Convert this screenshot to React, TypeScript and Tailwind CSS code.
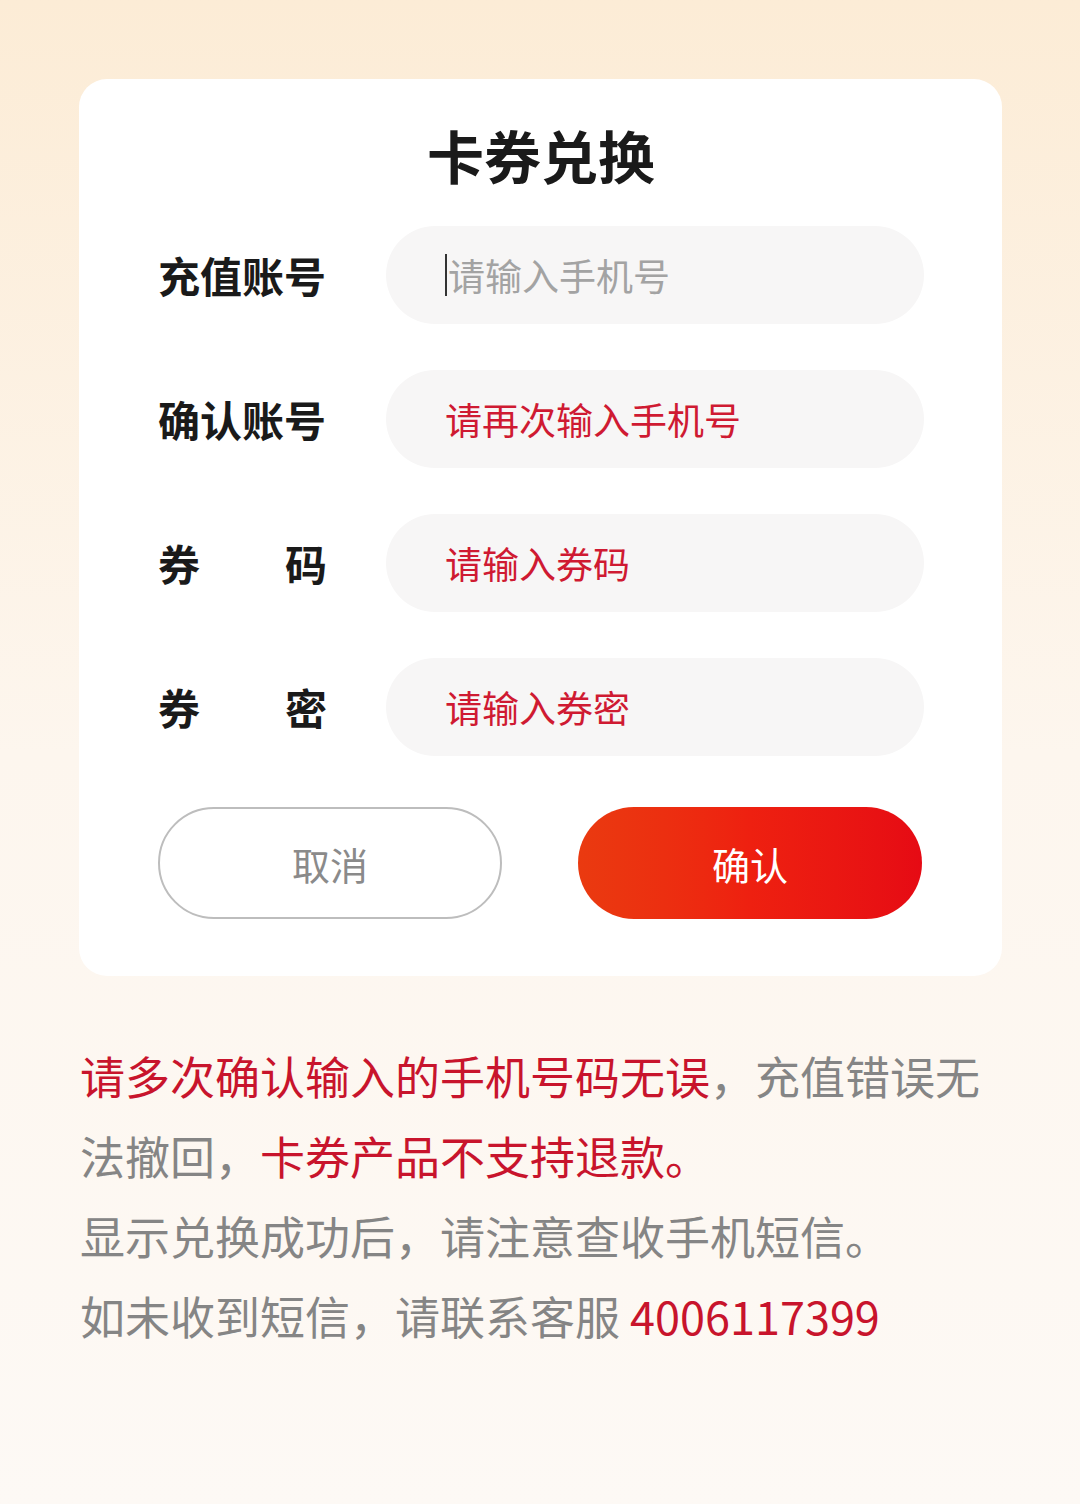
const FIELDS = [
  { label: ['充值账号'], placeholder: '请输入手机号', active: true },
  { label: ['确认账号'], placeholder: '请再次输入手机号', active: false },
  { label: ['券', '码'], placeholder: '请输入券码', active: false },
  { label: ['券', '密'], placeholder: '请输入券密', active: false },
]

function Field({ label, placeholder, active }: { label: string[]; placeholder: string; active: boolean }) {
  return (
    <div className="flex items-center gap-[59px]">
      <div className="w-[169px] flex justify-between text-[42px] font-bold leading-none text-[#1a1a1a]">
        {label.map((l) => (
          <span key={l}>{l}</span>
        ))}
      </div>
      <div className="flex-1 h-[98px] rounded-full bg-[#f7f6f6] flex items-center pl-[59px]">
        {active && <span className="w-[2px] h-[42px] bg-[#333] mr-[1px]" />}
        <span className={`text-[37px] leading-none ${active ? 'text-[#a3a3a3]' : 'text-[#cf1a32]'}`}>
          {placeholder}
        </span>
      </div>
    </div>
  )
}

export default function App() {
  return (
    <div
      className="w-[1080px] h-[1504px] bg-gradient-to-b from-[#fcecd6] via-[#fdf6ee] to-[#fdf9f5] pt-[79px]"
      style={{ fontFamily: '"Noto Sans CJK SC", "Noto Sans", sans-serif' }}
    >
      <div className="mx-[79px] w-[923px] bg-white rounded-[28px] pl-[79px] pr-[78px] pt-[47px] pb-[57px]">
        <h1 className="text-center text-[57px] font-bold leading-none text-[#1a1a1a]">卡券兑换</h1>
        <div className="mt-[43px] flex flex-col gap-[46px]">
          {FIELDS.map((f) => (
            <Field key={f.placeholder} {...f} />
          ))}
        </div>
        <div className="mt-[51px] flex justify-between pr-[2px]">
          <button className="w-[344px] h-[112px] rounded-full border-2 border-[#bdbdbd] bg-white text-[38px] text-[#8a8a8a]">
            取消
          </button>
          <button className="w-[344px] h-[112px] rounded-full bg-gradient-to-r from-[#ea3a10] via-[#ee2010] to-[#e60a14] text-[38px] text-white">
            确认
          </button>
        </div>
      </div>
      {/* lines are split by hand so each one is its own row */}
      <div className="mt-[60px] px-[80px] text-[45px] leading-[80px] text-[#858585] whitespace-nowrap">
        <p>
          <span className="text-[#c8142c]">请多次确认输入的手机号码无误</span>
          <span>，充值错误无</span>
        </p>
        <p>
          <span>法撤回，</span>
          <span className="text-[#c8142c]">卡券产品不支持退款。</span>
        </p>
        <p>显示兑换成功后，请注意查收手机短信。</p>
        <p>
          <span>如未收到短信，请联系客服 </span>
          <span className="text-[#c8142c]">4006117399</span>
        </p>
      </div>
    </div>
  )
}
